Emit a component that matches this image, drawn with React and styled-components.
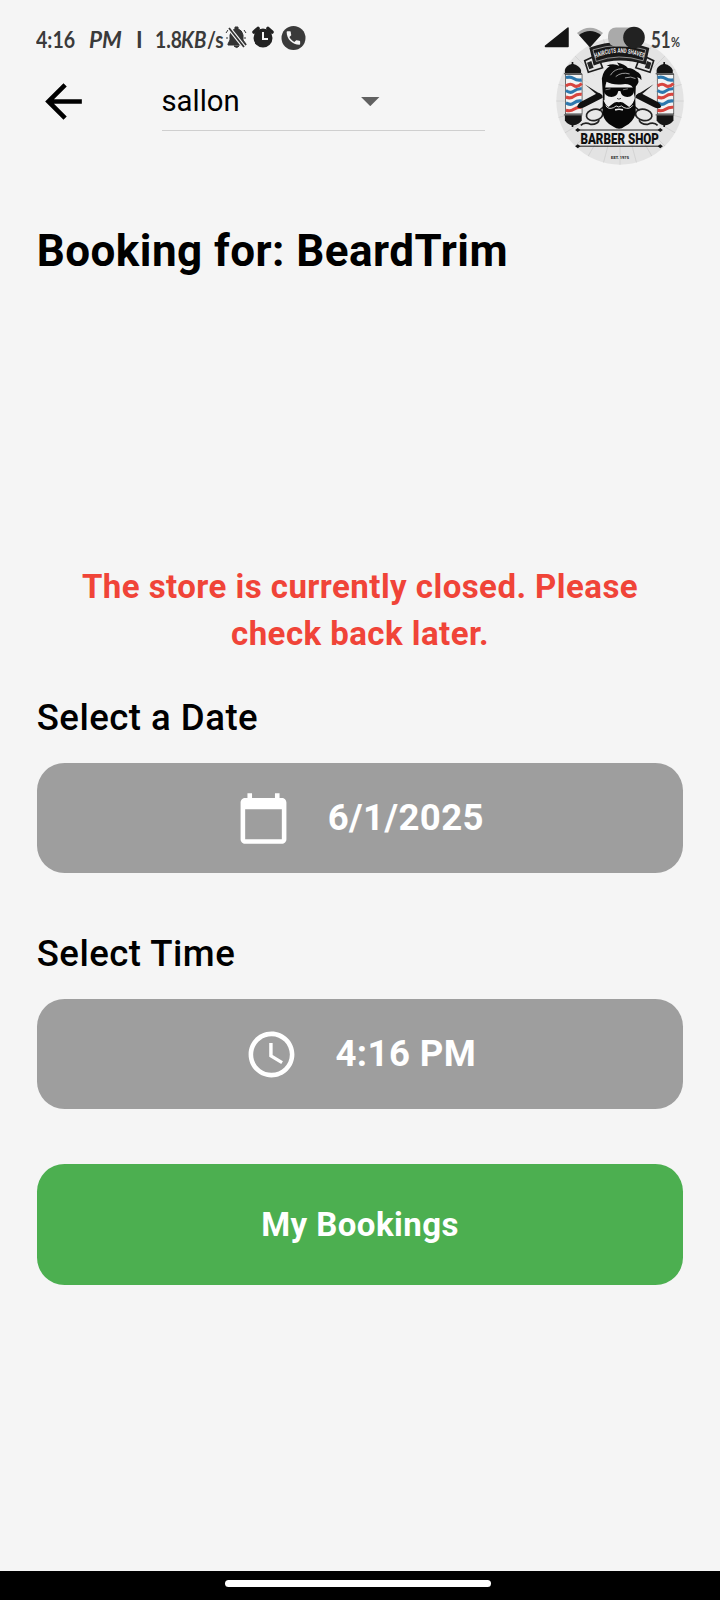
import React from "react";
import styled, { createGlobalStyle } from "styled-components";

const GlobalStyle = createGlobalStyle`
  * { box-sizing: border-box; }
  html, body { margin: 0; padding: 0; background: #f5f5f5; }
  body { font-family: Roboto, "Liberation Sans", sans-serif; color: #000; }
`;

const Screen = styled.div`
  width: 720px;
  height: 1600px;
  display: flex;
  flex-direction: column;
  background: #f5f5f5;
  overflow: hidden;
`;

const StatusBar = styled.div`
  position: relative;
  z-index: 2;
  height: 50px;
  flex: none;
  display: flex;
  justify-content: space-between;
  padding: 26px 39px 0 36px;
  color: #3a3a3a;
`;

const StatusGroup = styled.div`
  display: flex;
  align-items: flex-start;
  height: 24px;
`;

const StatusText = styled.span`
  width: ${(p) => p.$w}px;
  flex: none;
  margin-right: ${(p) => p.$gap || 0}px;
  font-family: Lato, Roboto, sans-serif;
  font-size: ${(p) => p.$size || 22.5}px;
  font-weight: 700;
  font-style: ${(p) => (p.$script ? "italic" : "normal")};
  line-height: ${(p) => p.$lh || 27}px;
  white-space: nowrap;
  transform: scaleX(${(p) => p.$stretch || 1});
  transform-origin: left center;
`;

const StatusIcon = styled.svg`
  display: block;
  flex: none;
  margin-right: ${(p) => p.$gap || 0}px;
`;

const AppBar = styled.header`
  height: 102px;
  flex: none;
  display: flex;
  align-items: center;
  padding: 0 36.5px 0 36px;
`;

const BackIcon = styled.svg`
  width: 55px;
  height: 55px;
  flex: none;
  margin-right: 70.5px;
`;

const StoreSelect = styled.div`
  width: 323.5px;
  height: 59px;
  flex: none;
  display: flex;
  align-items: center;
  border-bottom: 1.5px solid #cfcfcf;
`;

const StoreName = styled.span`
  width: 199.5px;
  font-size: 29.3px;
  line-height: 40px;
`;

const DropdownArrow = styled.svg`
  width: 18.5px;
  height: 9.2px;
  margin-top: 2px;
  fill: #616161;
`;

const Logo = styled.svg`
  width: 128px;
  height: 128px;
  flex: none;
  margin: 0 0 1px auto;
`;

const Content = styled.main`
  flex: 1;
  display: flex;
  flex-direction: column;
  padding: 73px 36.7px 0;
`;

const Title = styled.h1`
  margin: 0 0 286px;
  font-size: 44px;
  line-height: 52px;
  font-weight: 700;
  letter-spacing: 0.46px;
`;

const ClosedNotice = styled.p`
  margin: 0 0 38.7px;
  padding: 0 30px;
  text-align: center;
  color: #f04438;
  font-size: 33px;
  line-height: 47.3px;
  font-weight: 700;
  letter-spacing: 0.45px;
`;

const Label = styled.h2`
  margin: 0 0 23.5px;
  font-size: 36.6px;
  line-height: 43px;
  font-weight: 500;
  letter-spacing: 0.48px;
`;

const Button = styled.button`
  width: 100%;
  height: ${(p) => p.$h}px;
  flex: none;
  display: flex;
  align-items: center;
  justify-content: center;
  gap: 36.6px;
  margin: 0 0 ${(p) => p.$after || 0}px;
  padding: 0;
  border: 0;
  border-radius: 27.5px;
  background: ${(p) => p.$bg};
  color: #fff;
  font-family: inherit;
  font-size: ${(p) => p.$size}px;
  font-weight: 700;
  letter-spacing: ${(p) => p.$ls || 0}px;
`;

const ButtonIcon = styled.svg`
  width: 55px;
  height: 55px;
  margin-top: 1px;
  fill: #fff;
`;

const NavBar = styled.footer`
  height: 29.5px;
  flex: none;
  display: flex;
  justify-content: center;
  align-items: flex-start;
  padding: 9.5px 4px 0 0;
  background: #000;
`;

const NavPill = styled.div`
  width: 266px;
  height: 7px;
  border-radius: 4px;
  background: #fff;
`;

function BarberPole() {
  return (
    <g>
      <path d="M125 140v10M125 325v12" stroke="#111" strokeWidth="5" />
      <path d="M102 178v-14q2-14 23-19 21 5 26 19v14z" fill="#151515" />
      <path d="M102 299h51v17q-5 12-27 16-19-4-24-16z" fill="#151515" />
      <rect x="104" y="178" width="50" height="119" fill="#f3f3f3" stroke="#333" strokeWidth="2" />
      <g fill="none" strokeWidth="9.500">
        <path stroke="#2d78ae" d="M105 187q14-4 24 3t24 4M105 226q14 10 24 2t24-7M105 264q14 8 24 0t24-6" />
        <path stroke="#d8453f" d="M105 212q14-9 24-1t24-6M105 246q14 6 24-2t24-6M105 286q14 4 24-3t24-6" />
      </g>
      <path d="M99 175h55M99 300h56" stroke="#666" strokeWidth="4" />
    </g>
  );
}

function Scissor() {
  return (
    <g>
      <path d="M162 207l54 34-6 7z" fill="#161616" />
      <path d="M139 276q2-11 15-17l49-26q14 4 14 15l-52 27q-16 9-26 1z" fill="#111" />
      <ellipse cx="192" cy="300" rx="25" ry="17" transform="rotate(-12 192 300)" fill="none" stroke="#222" strokeWidth="5" />
      <path d="M206 316q-6 14-25 13-20-9-31 3M205 287l19-15" fill="none" stroke="#222" strokeWidth="5" />
    </g>
  );
}

function BarberLogo() {
  const rays = Array.from({ length: 24 }, (_, i) => i * 15);
  return (
    <Logo viewBox="75 64 388 388">
      <defs>
        <clipPath id="disc"><circle cx="269" cy="258" r="193" /></clipPath>
        <path id="ribbonLine" d="M195 128Q265 96 343 128" />
      </defs>
      <circle cx="269" cy="258" r="193" fill="#e3e3e3" />
      <g clipPath="url(#disc)" stroke="#cdcdcd" strokeWidth="2">
        {rays.map((a) => <path key={a} d="M269 148V54" transform={`rotate(${a} 269 258)`} />)}
      </g>
      <circle cx="269" cy="258" r="140" fill="#ebebeb" opacity=".6" />

      <BarberPole />
      <g transform="translate(278 0)"><BarberPole /></g>
      <Scissor />
      <g transform="matrix(-1 0 0 1 533 0)"><Scissor /></g>

      <g stroke="#1c1c1c" strokeWidth="5" fill="#e4e4e4">
        <path d="M188 124l-26 12 11 35 43-14-7-18-17 3z" />
        <path d="M346 124l25 12-11 35-43-14 7-18 17 3z" />
        <path d="M179 98Q265 66 355 99L345 145Q265 120 191 147z" fill="#202020" />
        <path d="M187 103Q265 77 347 103L339 136Q265 112 197 138z" fill="#171717" stroke="#ccc" strokeWidth="2" />
      </g>
      <path d="M169 142l13-5 7 20-13 5zM351 137l13 5-6 20-14-5z" fill="#222" />
      <text fill="#eee" fontFamily="Roboto, sans-serif" fontSize="20" fontWeight="700">
        <textPath href="#ribbonLine" textLength="150" lengthAdjust="spacingAndGlyphs">HAIRCUTS AND SHAVES</textPath>
      </text>

      <path d="M221 208q42-16 94 0l-2 60-24 24h-46l-22-24z" fill="#ededed" />
      <path d="M218 256l-4-66q4-26 24-37l-10-2q22-9 39 1l-7-11q24 5 33 17 16 1 25 10 18 7 16 27-6-9-13-9 10 12-4 28l-2 40-7-36q-7-13-29-11-34 3-51-7-6 18-6 56z" fill="#0b0b0b" />
      <path d="M240 180q11-20 37-20M256 184q18-15 42-8M284 188q19-6 32 2" stroke="#bbb" strokeWidth="2.500" fill="none" />
      <path d="M219 217h93v6q-1 23-21 23-17 0-21-18h-6q-4 18-21 18-20 0-24-21z" fill="#080808" />
      <path d="M225 224l15-3M278 224l15-3" stroke="#777" strokeWidth="3" />
      <path d="M217 248q6 22 17 28l12-9q9-8 19-5 11-3 19 5l13 9q13-9 18-30l2 48q-9 30-34 41-8 7-17 7-8 0-18-7-25-10-32-39z" fill="#080808" />
      <path d="M226 272q7 13 24 6 7-9 15-2 9-7 16 2 17 7 27-7" fill="none" stroke="#ddd" strokeWidth="3" />
      <path d="M254 285q12-4 24 0" fill="none" stroke="#eee" strokeWidth="5" />
      <path d="M260 250q5 5 12 0" fill="none" stroke="#444" strokeWidth="3" />

      <path d="M140 346h252M140 395h252" stroke="#171717" strokeWidth="3" />
      <path d="M133 346l8-6 8 6-8 6zM383 346l8-6 8 6-8 6zM133 395l8-6 8 6-8 6zM383 395l8-6 8 6-8 6z" fill="#171717" />
      <text x="149" y="388" fill="#101010" fontFamily="Roboto, sans-serif" fontWeight="900" fontSize="47" textLength="238" lengthAdjust="spacingAndGlyphs">BARBER SHOP</text>
      <text x="242" y="434" fill="#222" fontFamily="Roboto, sans-serif" fontWeight="800" fontSize="10" textLength="54" lengthAdjust="spacingAndGlyphs">EST. 1975</text>
    </Logo>
  );
}

export default function App() {
  return (
    <>
      <GlobalStyle />
      <Screen>
        <StatusBar>
          <StatusGroup>
            <StatusText $w={38} $gap={15} $stretch={0.87}>4:16</StatusText>
            <StatusText $w={35} $gap={12} $script>PM</StatusText>
            <StatusText $w={7} $gap={12}>I</StatusText>
            <StatusText $w={26} $stretch={0.86}>1.8</StatusText>
            <StatusText $w={26} $script $stretch={0.9}>KB</StatusText>
            <StatusText $w={15} $gap={3} $stretch={0.85}>/s</StatusText>
            <StatusIcon width="22" height="24" viewBox="0 0 22 24" $gap={5}>
              <path d="M3 18l2-4V9q1-5 5-6V1h3v2q4 1 5 6v5l3 4v1H3zM9 20h5q-2 3-5 0M1 7l2-3M21 7l-2-3M1 12h2M19 12h2" fill="#333" stroke="#333" />
              <path d="M4 2l15 19" stroke="#f5f5f5" strokeWidth="4" />
              <path d="M4 2l15 19" stroke="#333" strokeWidth="1.800" />
            </StatusIcon>
            <StatusIcon width="22" height="24" viewBox="0 0 22 24" $gap={7}>
              <circle cx="11" cy="12" r="9.500" fill="#222" />
              <path d="M2 6l4-3.500M16 2.500l4 3.500" stroke="#222" strokeWidth="3.600" strokeLinecap="round" />
              <path d="M11 6v7h5" fill="none" stroke="#f5f5f5" strokeWidth="2" />
            </StatusIcon>
            <StatusIcon width="25" height="25" viewBox="0 0 25 25">
              <circle cx="12.500" cy="12" r="12" fill="#3a3a3a" />
              <path transform="translate(3.400 3) scale(.75)" fill="#f5f5f5" d="M6.620 10.790c1.440 2.830 3.760 5.140 6.590 6.590l2.200-2.200c.27-.27.67-.36 1.020-.24 1.120.37 2.330.57 3.570.57.55 0 1 .45 1 1V20c0 .55-.45 1-1 1-9.390 0-17-7.610-17-17 0-.55.45-1 1-1h3.500c.55 0 1 .45 1 1 0 1.250.2 2.450.57 3.570.11.35.03.74-.25 1.020l-2.200 2.200z" />
            </StatusIcon>
          </StatusGroup>
          <StatusGroup>
            <StatusIcon width="25" height="22" viewBox="0 0 25 22" $gap={7}>
              <path d="M1.500 20L24 2v18.500H1.500z" fill="#151515" stroke="#151515" strokeLinejoin="round" strokeWidth="1.500" />
            </StatusIcon>
            <StatusIcon width="28" height="22" viewBox="0 0 28 22" $gap={4}>
              <path d="M1 7Q14-3.500 27 7L14 21z" fill="#aaa" />
              <path d="M3 9Q14 1 25 9L14 21.500z" fill="#151515" />
            </StatusIcon>
            <StatusIcon width="37" height="23" viewBox="0 0 37 23" $gap={6}>
              <rect x="0" y="1.500" width="35" height="19" rx="8" fill="#aaa" />
              <circle cx="26" cy="11.500" r="10.800" fill="#222" />
            </StatusIcon>
            <StatusText $w={20} $size={23.5} $stretch={0.72}>51</StatusText>
            <StatusText $w={10} $size={13} $lh={33} $stretch={0.85}>%</StatusText>
          </StatusGroup>
        </StatusBar>

        <AppBar>
          <BackIcon viewBox="0 0 24 24">
            <path d="M20 11H7.830l5.590-5.590L12 4l-8 8 8 8 1.410-1.410L7.830 13H20v-2z" />
          </BackIcon>
          <StoreSelect>
            <StoreName>sallon</StoreName>
            <DropdownArrow viewBox="0 0 10 5"><path d="M0 0l5 5 5-5z" /></DropdownArrow>
          </StoreSelect>
          <BarberLogo />
        </AppBar>

        <Content>
          <Title>Booking for: BeardTrim</Title>
          <ClosedNotice>The store is currently closed. Please check back later.</ClosedNotice>
          <Label>Select a Date</Label>
          <Button $bg="#9e9e9e" $h={110} $size={36.6} $ls={0.4} $after={59.5}>
            <ButtonIcon viewBox="0 0 24 24">
              <path d="M20 3h-1V1h-2v2H7V1H5v2H4c-1.100 0-2 .9-2 2v16c0 1.100.9 2 2 2h16c1.100 0 2-.9 2-2V5c0-1.100-.9-2-2-2zm0 18H4V8h16v13z" />
            </ButtonIcon>
            <span>6/1/2025</span>
          </Button>
          <Label>Select Time</Label>
          <Button $bg="#9e9e9e" $h={110} $size={36.6} $ls={0.4} $after={55.5}>
            <ButtonIcon viewBox="0 0 24 24">
              <path d="M11.990 2C6.470 2 2 6.480 2 12s4.470 10 9.990 10C17.520 22 22 17.520 22 12S17.520 2 11.990 2zM12 20c-4.420 0-8-3.580-8-8s3.580-8 8-8 8 3.580 8 8-3.580 8-8 8zm.5-13H11v6l5.250 3.150.75-1.230-4.500-2.670z" />
            </ButtonIcon>
            <span>4:16 PM</span>
          </Button>
          <Button $bg="#4caf50" $h={120.5} $size={33} $ls={0.46}>My Bookings</Button>
        </Content>

        <NavBar>
          <NavPill />
        </NavBar>
      </Screen>
    </>
  );
}
